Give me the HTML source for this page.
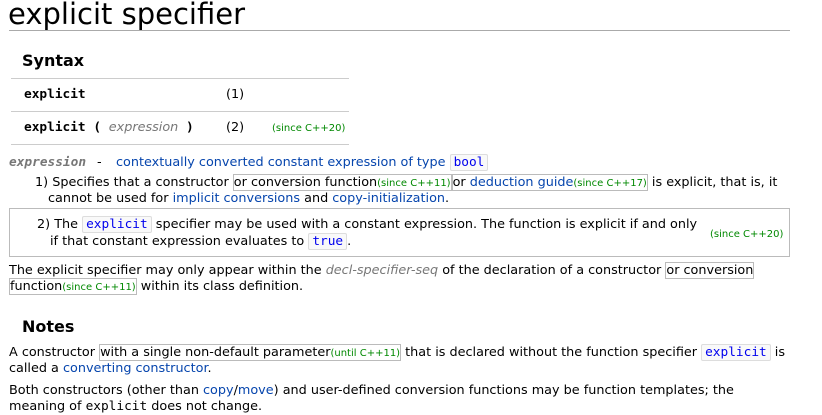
<!DOCTYPE html><html><head><style>
body{margin:0;width:822px;height:413px;background:#fff;font-family:"DejaVu Sans",sans-serif;font-size:12.8px;color:#000;position:relative;overflow:hidden}
.a{position:absolute;white-space:nowrap;line-height:16px}
a{color:#0645ad;text-decoration:none}
.m{font-family:"DejaVu Sans Mono",monospace}
.s{font-size:10px;color:#080}
.b{border:1px solid #bbb}
.k{font-family:"DejaVu Sans Mono",monospace;color:#00e;background:#f9f9f9;border:1px solid #ddd;border-radius:2px;padding:0 3px}
.h{border-top:1px solid #ccc;position:absolute;left:11px;width:338px}
.g{color:#777;font-style:italic}
</style></head><body>
<div class="a" style="left:8px;top:-2px;font-size:29px;line-height:32px">explicit specifier</div>
<div style="position:absolute;left:9px;top:30px;width:781px;border-top:1px solid #aaa"></div>
<div class="a" style="left:22px;top:51px;font-size:16px;font-weight:bold;line-height:20px">Syntax</div>
<div class="h" style="top:78px"></div><div class="h" style="top:111px"></div><div class="h" style="top:144px"></div>
<div class="a m" style="left:24px;top:87px;font-weight:bold">explicit</div>
<div class="a" style="left:226px;top:87px">(1)</div>
<div class="a m" style="left:24px;top:120px;font-weight:bold">explicit ( <span class="g" style="font-family:'DejaVu Sans';font-weight:normal">expression</span> )</div>
<div class="a" style="left:226px;top:120px">(2)</div>
<div class="a s" style="left:272px;top:121px">(since C++20)</div>
<div class="a" style="left:9px;top:155px"><span class="m" style="font-weight:bold;font-style:italic;color:#777">expression</span></div>
<div class="a" style="left:97px;top:155px">-</div>
<div class="a" style="left:116px;top:155px"><a>contextually converted constant expression of type</a> <span class="k">bool</span></div>
<div class="a" style="left:35px;top:175px">1) Specifies that a constructor <span class="b">or conversion function<span class="s">(since C++11)</span></span><span class="b">or <a>deduction guide</a><span class="s">(since C++17)</span></span> is explicit, that is, it</div>
<div class="a" style="left:48px;top:191px">cannot be used for <a>implicit conversions</a> and <a>copy-initialization</a>.</div>
<div style="position:absolute;left:9px;top:208px;width:779px;height:47px;border:1px solid #bbb"></div>
<div class="a" style="left:37px;top:217px">2) The <span class="k">explicit</span> specifier may be used with a constant expression. The function is explicit if and only</div>
<div class="a" style="left:50px;top:234px">if that constant expression evaluates to <span class="k">true</span>.</div>
<div class="a s" style="left:710px;top:227px">(since C++20)</div>
<div class="a" style="left:9px;top:263px">The explicit specifier may only appear within the <span class="g">decl-specifier-seq</span> of the declaration of a constructor <span class="b">or conversion</span></div>
<div class="a" style="left:9px;top:279px"><span class="b">function<span class="s">(since C++11)</span></span> within its class definition.</div>
<div class="a" style="left:22px;top:317px;font-size:16px;font-weight:bold;line-height:20px">Notes</div>
<div class="a" style="left:9px;top:345px">A constructor <span class="b">with a single non-default parameter<span class="s">(until C++11)</span></span> that is declared without the function specifier <span class="k">explicit</span> is</div>
<div class="a" style="left:9px;top:361px">called a <a>converting constructor</a>.</div>
<div class="a" style="left:9px;top:383px">Both constructors (other than <a>copy</a>/<a>move</a>) and user-defined conversion functions may be function templates; the</div>
<div class="a" style="left:9px;top:399px">meaning of <span class="m">explicit</span> does not change.</div>
</body></html>
